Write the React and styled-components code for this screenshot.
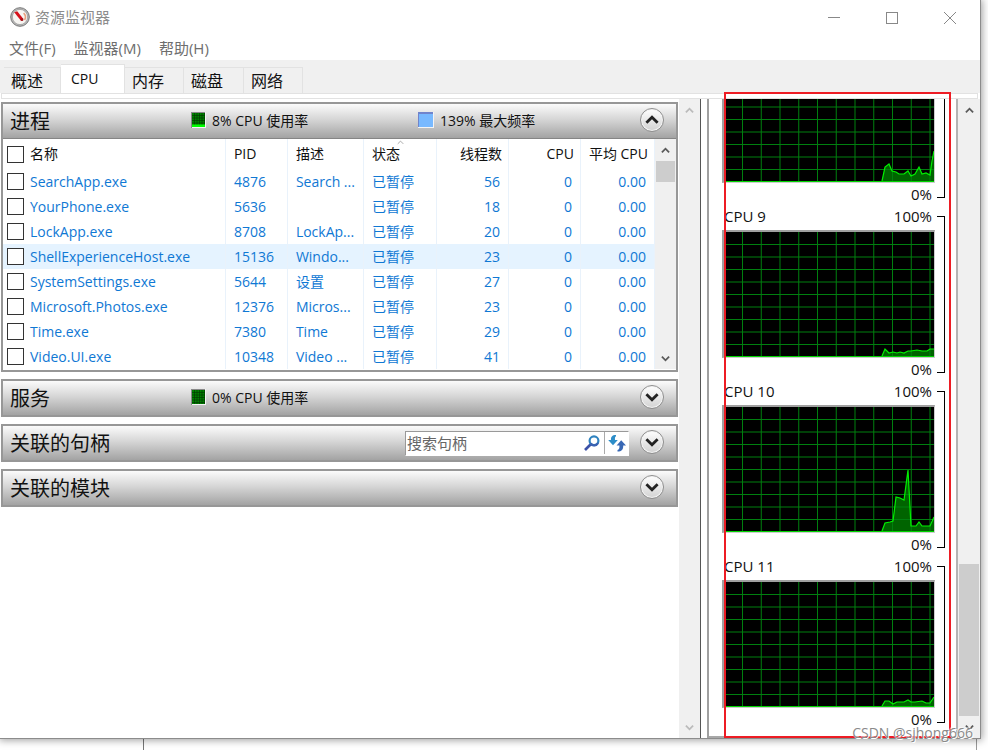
import React from "react";
import styled, { createGlobalStyle } from "styled-components";

const GlobalStyle = createGlobalStyle`
  * {
    box-sizing: border-box;
  }

  body {
    margin: 0;
    overflow: hidden;
    background: #fff;
    color: #111;
    font-family: "Open Sans", "Noto Sans CJK SC", sans-serif;
    font-size: 14px;
  }

  button,
  input {
    font: inherit;
    color: inherit;
    margin: 0;
    padding: 0;
    border: 0;
    border-radius: 0;
    background: none;
  }
`;

const Desktop = styled.div`
  position: relative;
  display: flex;
  flex-direction: column;
  height: 100vh;
  padding-right: 7px;
`;

const Window = styled.div`
  position: relative;
  flex: 1;
  min-height: 0;
  display: flex;
  flex-direction: column;
  background: #fff;
  border-right: 1px solid #8c8c8c;
  border-bottom: 1px solid #8c8c8c;
  box-shadow: 0 0 8px 1px rgba(0, 0, 0, 0.4);
`;

const Behind = styled.div`
  height: 11px;
  margin: 0 4px 0 143px;
  border-left: 1px solid #777;
  border-right: 1px solid #999;
`;

const TitleBar = styled.header`
  display: flex;
  align-items: center;
  height: 36px;
  padding: 0 1px 2px 10px;
  gap: 5px;
  color: #8c8c8c;

  h1 {
    flex: 1;
    margin: 0;
    font-size: 15px;
    font-weight: 400;
    line-height: 20px;
  }
`;

const WindowButtons = styled.div`
  display: flex;
  padding-top: 2px;
`;

const WindowButton = styled.button`
  display: flex;
  align-items: center;
  justify-content: center;
  width: 58px;
  height: 34px;
`;

const MenuBar = styled.nav`
  display: flex;
  align-items: center;
  gap: 18px;
  height: 24px;
  padding-left: 9px;

  button {
    color: #6e6e6e;
    font-size: 15px;
    line-height: 24px;
  }
`;

const TabBar = styled.div`
  display: flex;
  align-items: flex-end;
  height: 33px;
  padding-left: 4px;
  background: #f0f0f0;
`;

const Tab = styled.button`
  width: ${(p) => p.$width}px;
  height: ${(p) => (p.$active ? 29 : 26)}px;
  padding-left: ${(p) => (p.$active ? 10 : 7)}px;
  text-align: left;
  font-size: ${(p) => (p.$active ? 14 : 16)}px;
  line-height: 24px;
  background: ${(p) => (p.$active ? "#fff" : "#f0f0f0")};
  border: 1px solid #e2e2e2;
  border-width: 1px 1px 0 0;
`;

const Strip = styled.div`
  height: 6px;
  margin: 0 2px 0 1px;
  background: #fff;
  border: 1px solid #e2e2e2;
`;

const Content = styled.main`
  flex: 1;
  min-height: 0;
  display: flex;
`;

const LeftPane = styled.div`
  flex: 1;
  min-width: 0;
  display: flex;
  flex-direction: column;
  gap: 7px;
  padding: 3px 1px 0 1px;
`;

const ScrollTrack = styled.div`
  flex: none;
  display: flex;
  flex-direction: column;
  align-items: center;
  justify-content: space-between;
  width: ${(p) => p.$width}px;
  padding: 0 1px;
  background: #f0f0f0;

  button {
    display: flex;
    align-items: center;
    justify-content: center;
    width: 100%;
    height: 22px;
  }
`;

const Thumb = styled.div`
  width: 100%;
  height: ${(p) => p.$height}px;
  margin-top: ${(p) => (p.$end ? "auto" : 0)};
  margin-bottom: ${(p) => (p.$end ? 0 : "auto")};
  background: #cdcdcd;
`;

const Card = styled.section`
  border: 2px solid #979797;
`;

const CardHeader = styled.div`
  display: flex;
  align-items: center;
  height: ${(p) => (p.$open ? 35 : 34)}px;
  padding: 0 12px 2px 7px;
  background: linear-gradient(#fbfbfb, #d6d6d6 45%, #a3a3a3);
  border-bottom: ${(p) => (p.$open ? "1px solid #858585" : "0")};

  h2 {
    flex: none;
    width: 181px;
    margin: 0;
    padding-top: 4px;
    font-size: 20px;
    font-weight: 400;
    line-height: 32px;
  }
`;

const Meter = styled.div`
  flex: none;
  display: flex;
  align-items: center;
  gap: 6px;
  width: 227px;

  & + & {
    width: auto;
  }
`;

const Spacer = styled.div`
  flex: 1;
`;

const RoundButton = styled.button`
  flex: none;
  display: flex;
  align-items: center;
  justify-content: center;
  width: 24px;
  height: 24px;
  border: 1px solid #8f8f8f;
  border-radius: 50%;
  background: linear-gradient(#fff, #d2d2d2);
  box-shadow: inset 0 0 0 1px #f3f3f3;
`;

const SearchBox = styled.div`
  display: flex;
  align-items: center;
  width: 224px;
  height: 25px;
  margin: 2px 11px 0 0;
  background: #fff;
  border: 1px solid #fff;
  border-top-color: #999;
  border-left-color: #999;

  input {
    flex: 1;
    min-width: 0;
    padding-left: 1px;
    font-size: 15px;
    outline: none;
  }

  input::placeholder {
    color: #666;
    opacity: 1;
  }

  button {
    display: flex;
    align-items: center;
    justify-content: center;
    width: 24px;
    height: 22px;
  }

  button + button {
    border-left: 1px solid #aaa;
  }
`;

const TableArea = styled.div`
  display: flex;
  padding-bottom: 1px;
`;

const ProcessTable = styled.table`
  flex: 1;
  min-width: 0;
  table-layout: fixed;
  border-collapse: collapse;

  th,
  td {
    height: 25px;
    padding: 0 8px;
    text-align: left;
    font-weight: 400;
    line-height: 20px;
    white-space: nowrap;
    overflow: hidden;
    border-right: 1px solid #e9f2fb;
  }

  th {
    position: relative;
    height: 30px;
    padding-right: 6px;
  }

  th:first-child,
  td:first-child {
    padding-left: 4px;
  }

  th:nth-child(n + 5),
  td:nth-child(n + 5) {
    text-align: right;
  }

  td {
    color: #0f78d4;
  }
`;

const Row = styled.tr`
  background: ${(p) => (p.$hover ? "#e5f3ff" : "transparent")};
`;

const CheckLabel = styled.label`
  display: flex;
  align-items: center;
  gap: 6px;

  input {
    appearance: none;
    width: 17px;
    height: 17px;
    background: #fff;
    border: 1px solid #333;
  }
`;

const SortMark = styled.span`
  position: absolute;
  top: 0;
  left: 46%;
  display: flex;
`;

const Splitter = styled.div`
  flex: none;
  width: 9px;
  background: #fff;
  border-left: 1px solid #555;
  border-right: 2px solid #a0a0a0;
`;

const GraphPane = styled.aside`
  flex: none;
  position: relative;
  display: flex;
  width: 249px;
  border-right: 2px solid #b4b4b4;
  border-bottom: 2px solid #a8a8a8;
`;

const GraphList = styled.div`
  flex: 1;
  min-width: 0;
  display: flex;
  flex-direction: column;
  justify-content: flex-end;
  overflow: hidden;
  padding: 0 11px 6px 13px;
`;

const GraphItem = styled.div`
  flex: none;
  display: flex;
  gap: 2px;
`;

const GraphBody = styled.div`
  flex: 1;
  min-width: 0;
`;

const GraphLabel = styled.div`
  display: flex;
  justify-content: space-between;
  height: ${(p) => (p.$foot ? 22 : 25)}px;
  padding: 0 3px 0 2px;
  font-size: 15px;
  line-height: 22px;
`;

const GraphFrame = styled.div`
  height: 128px;
  background: #000;
  border-style: solid;
  border-width: 2px 1px 1px 3px;
  border-color: #a0a0a0 #ccc #ccc #a0a0a0;

  svg {
    display: block;
    width: 100%;
    height: 100%;
  }
`;

const Bracket = styled.div`
  width: 8px;
  height: 157px;
  margin-top: 11px;
  border: 1px solid #000;
  border-left: 0;
`;

const Highlight = styled.div`
  position: absolute;
  inset: -7px 5px -2px 15px;
  border: 2px solid #ed1c24;
  pointer-events: none;
`;

const Watermark = styled.div`
  position: absolute;
  right: 15px;
  bottom: 7px;
  color: #8a8a8a;
  line-height: 20px;
  text-shadow: 1px 1px 0 #fff, -1px -1px 0 rgba(255, 255, 255, 0.6);
`;

const tabs = [
  { name: "概述", width: 57 },
  { name: "CPU", width: 64, active: true },
  { name: "内存", width: 59 },
  { name: "磁盘", width: 60 },
  { name: "网络", width: 59 },
];

const processes = [
  ["SearchApp.exe", "4876", "Search ...", "56"],
  ["YourPhone.exe", "5636", "", "18"],
  ["LockApp.exe", "8708", "LockAp...", "20"],
  ["ShellExperienceHost.exe", "15136", "Windo...", "23"],
  ["SystemSettings.exe", "5644", "设置", "27"],
  ["Microsoft.Photos.exe", "12376", "Micros...", "23"],
  ["Time.exe", "7380", "Time", "29"],
  ["Video.UI.exe", "10348", "Video ...", "41"],
];

// the first graph is scrolled half out of view, so its header row is left out
const graphs = [
  {
    points:
      "157,124 160,110 164,107 167,114 171,115 174,117 179,117 183,114 186,119 190,117 194,110 197,117 201,116 205,118 207,104 209,94",
  },
  {
    name: "CPU 9",
    points:
      "157,124 160,117 164,121 168,120 172,121 175,120 179,121 183,119 186,119 192,118 197,119 202,119 205,117 209,117",
  },
  {
    name: "CPU 10",
    points:
      "157,124 160,116 165,115 168,114 171,90 175,91 179,93 183,63 186,119 191,119 194,115 197,119 205,119 209,110",
  },
  {
    name: "CPU 11",
    points:
      "157,124 160,119 164,119 168,122 172,120 179,120 183,118 186,120 190,120 197,119 201,121 205,121 209,115",
  },
];

const Chevron = ({ up, color = "#5a5a5a", size = 9, weight = 2 }) => (
  <svg width={size} height={size} viewBox="0 0 10 10" fill="none">
    <path
      d={up ? "M1 7L5 3L9 7" : "M1 3L5 7L9 3"}
      stroke={color}
      strokeWidth={weight}
    />
  </svg>
);

const AppIcon = () => (
  <svg width="20" height="20" viewBox="0 0 20 20">
    <circle cx="10" cy="10" r="9.3" fill="#b9b9b9" stroke="#777" />
    <circle cx="10" cy="10" r="7.6" fill="#f7f5f2" stroke="#8d8d8d" strokeWidth="0.6" />
    <path d="M13.6 6.2A5.5 5.5 0 0 1 14.6 13" fill="none" stroke="#e8a07c" strokeWidth="1.6" />
    <path d="M4.2 5.2L7.2 4.2L13.4 12L11 13.8Z" fill="#d5121c" />
    <circle cx="12" cy="12.7" r="1.4" fill="#a31016" />
  </svg>
);

const CpuMark = ({ busy }) => (
  <svg width="15" height="16" viewBox="0 0 15 16">
    <rect width="15" height="16" fill="#f4f4f4" />
    <path d="M0 16V0H14V1H1V16Z" fill="#888" />
    <rect x="1" y="1" width="13" height="14" fill="#008000" />
    <path
      d="M3.5 1V15M6 1V15M8.5 1V15M11 1V15M13.5 1V15M1 3.5H14M1 6H14M1 8.5H14M1 11H14M1 13.5H14"
      stroke="#003c00"
      strokeWidth="0.7"
    />
    {busy && <rect x="1" y="12.5" width="13" height="2.5" fill="#00ff00" />}
  </svg>
);

const FrequencyMark = () => (
  <svg width="16" height="16" viewBox="0 0 16 16">
    <rect width="16" height="16" fill="#f4f4f4" />
    <rect width="15" height="15" fill="#7084cc" />
    <rect x="1" y="2" width="14" height="13" fill="#78b9ff" />
  </svg>
);

const SearchIcon = () => (
  <svg width="16" height="16" viewBox="0 0 16 16" fill="none">
    <path d="M1 15L6.5 9.5" stroke="#3c51a8" strokeWidth="2.6" />
    <circle cx="10" cy="5.8" r="4.4" stroke="#2f83c0" strokeWidth="2.2" />
    <path d="M6.5 8.5A4.4 4.4 0 0 0 14 8" stroke="#3b62b2" strokeWidth="2.2" />
  </svg>
);

const RefreshIcon = () => (
  <svg width="18" height="17" viewBox="0 0 18 17">
    <path d="M8 0C4 0 2.8 2 3 5H0.2L5 10.2L9.8 5H7C6.8 3 7 1.7 8 1.2Z" fill="#2d8dc8" />
    <path d="M9.5 16.5C13.6 16.5 15.4 14.5 15.2 10.5H18L13.2 5.2L8.6 10.5H11.4C11.6 13 11.2 14.5 9.5 15Z" fill="#3868b5" />
  </svg>
);

const CpuGraph = ({ name, points }) => {
  const columns = Array.from({ length: 11 }, (_, i) => 17.5 + i * 18.75);
  const rows = Array.from({ length: 9 }, (_, i) => (i + 1) * 12.5);
  return (
    <GraphItem>
      <GraphBody>
        <GraphLabel>
          {name && (
            <>
              <span>{name}</span>
              <span>100%</span>
            </>
          )}
        </GraphLabel>
        <GraphFrame>
          <svg viewBox="0 0 209 125" preserveAspectRatio="none">
            <polygon points={`${points} 209,125 157,125`} fill="#006400" />
            {columns.map((x) => (
              <path key={x} d={`M${x} 0V125`} stroke="#00800f" />
            ))}
            {rows.map((y) => (
              <path key={y} d={`M0 ${y}H209`} stroke="#00800f" />
            ))}
            <path d="M0 124.5H209" stroke="#00d400" />
            <polyline points={points} fill="none" stroke="#00f000" strokeWidth="1.2" />
          </svg>
        </GraphFrame>
        <GraphLabel $foot>
          <span />
          <span>0%</span>
        </GraphLabel>
      </GraphBody>
      <Bracket />
    </GraphItem>
  );
};

const Processes = () => (
  <Card>
    <CardHeader $open>
      <h2>进程</h2>
      <Meter>
        <CpuMark busy />
        8% CPU 使用率
      </Meter>
      <Meter>
        <FrequencyMark />
        139% 最大频率
      </Meter>
      <Spacer />
      <RoundButton aria-label="折叠">
        <Chevron up size={14} color="#222" />
      </RoundButton>
    </CardHeader>
    <TableArea>
      <ProcessTable>
        <colgroup>
          <col />
          <col width="62" />
          <col width="75" />
          <col width="73" />
          <col width="72" />
          <col width="72" />
          <col width="73" />
        </colgroup>
        <thead>
          <tr>
            <th>
              <CheckLabel>
                <input type="checkbox" />
                名称
              </CheckLabel>
            </th>
            <th>PID</th>
            <th>描述</th>
            <th>
              状态
              <SortMark>
                <Chevron up size={7} color="#888" weight={1} />
              </SortMark>
            </th>
            <th>线程数</th>
            <th>CPU</th>
            <th>平均 CPU</th>
          </tr>
        </thead>
        <tbody>
          {processes.map(([name, pid, description, threads]) => (
            <Row key={pid} $hover={pid === "15136"}>
              <td>
                <CheckLabel>
                  <input type="checkbox" />
                  {name}
                </CheckLabel>
              </td>
              <td>{pid}</td>
              <td>{description}</td>
              <td>已暂停</td>
              <td>{threads}</td>
              <td>0</td>
              <td>0.00</td>
            </Row>
          ))}
        </tbody>
      </ProcessTable>
      <ScrollTrack $width={21}>
        <button aria-label="向上滚动">
          <Chevron up />
        </button>
        <Thumb $height={21} />
        <button aria-label="向下滚动">
          <Chevron />
        </button>
      </ScrollTrack>
    </TableArea>
  </Card>
);

const ClosedCard = ({ title, children }) => (
  <Card>
    <CardHeader>
      <h2>{title}</h2>
      {children}
      <Spacer />
      {title === "关联的句柄" && (
        <SearchBox>
          <input type="text" placeholder="搜索句柄" aria-label="搜索句柄" />
          <button aria-label="搜索">
            <SearchIcon />
          </button>
          <button aria-label="刷新">
            <RefreshIcon />
          </button>
        </SearchBox>
      )}
      <RoundButton aria-label="展开">
        <Chevron size={14} color="#222" />
      </RoundButton>
    </CardHeader>
  </Card>
);

const App = () => {
  return (
    <Desktop>
      <GlobalStyle />
      <Window>
        <TitleBar>
          <AppIcon />
          <h1>资源监视器</h1>
          <WindowButtons>
            <WindowButton aria-label="最小化">
              <svg width="12" height="12">
                <path d="M0 5.5H12" stroke="#888" />
              </svg>
            </WindowButton>
            <WindowButton aria-label="最大化">
              <svg width="12" height="12" fill="none">
                <rect x="0.5" y="0.5" width="11" height="11" stroke="#888" />
              </svg>
            </WindowButton>
            <WindowButton aria-label="关闭">
              <svg width="12" height="12">
                <path d="M0 0L12 12M12 0L0 12" stroke="#888" />
              </svg>
            </WindowButton>
          </WindowButtons>
        </TitleBar>
        <MenuBar>
          <button>文件(F)</button>
          <button>监视器(M)</button>
          <button>帮助(H)</button>
        </MenuBar>
        <TabBar>
          {tabs.map((tab) => (
            <Tab key={tab.name} $width={tab.width} $active={tab.active}>
              {tab.name}
            </Tab>
          ))}
        </TabBar>
        <Strip />
        <Content>
          <LeftPane>
            <Processes />
            <ClosedCard title="服务">
              <Meter>
                <CpuMark />
                0% CPU 使用率
              </Meter>
            </ClosedCard>
            <ClosedCard title="关联的句柄" />
            <ClosedCard title="关联的模块" />
          </LeftPane>
          <ScrollTrack $width={21}>
            <button aria-label="向上滚动">
              <Chevron up color="#bbb" />
            </button>
            <button aria-label="向下滚动">
              <Chevron color="#bbb" />
            </button>
          </ScrollTrack>
          <Splitter />
          <GraphPane>
            <GraphList>
              {graphs.map((graph) => (
                <CpuGraph key={graph.points} {...graph} />
              ))}
            </GraphList>
            <Highlight />
          </GraphPane>
          <ScrollTrack $width={22}>
            <button aria-label="向上滚动">
              <Chevron up />
            </button>
            <Thumb $height={152} $end />
            <button aria-label="向下滚动">
              <Chevron />
            </button>
          </ScrollTrack>
        </Content>
      </Window>
      <Behind />
      <Watermark>CSDN @sjhong666</Watermark>
    </Desktop>
  );
};

export default App;
